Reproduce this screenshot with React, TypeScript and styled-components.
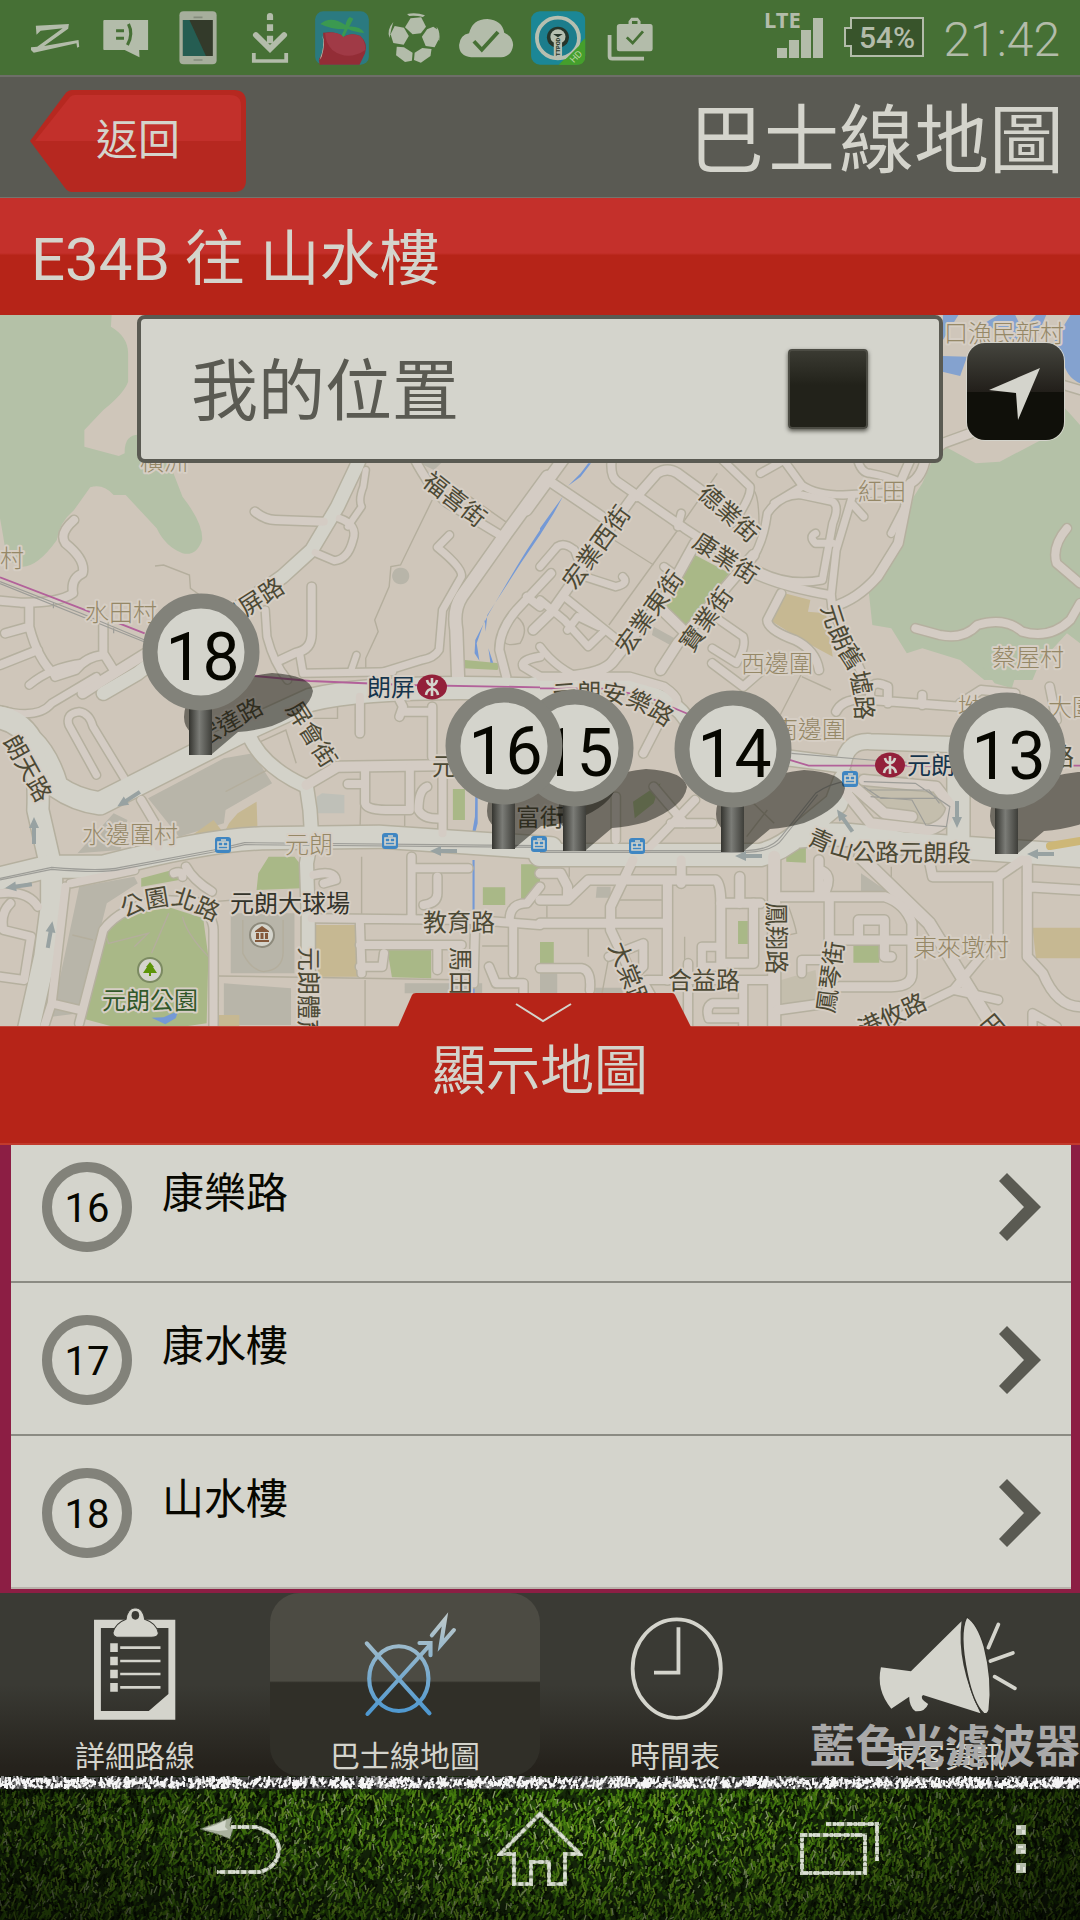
import React from "react";
import styled, { createGlobalStyle } from "styled-components";

const GlobalStyle = createGlobalStyle`
  * { box-sizing: border-box; }
  body {
    margin: 0;
    background: #22221b;
    font-family: Roboto, "Noto Sans CJK TC", sans-serif;
  }
  button { font: inherit; border: 0; padding: 0; margin: 0; background: none; cursor: pointer; }
  ul { list-style: none; margin: 0; padding: 0; }
  h1, h2 { margin: 0; font-weight: 400; }
  svg { display: block; }
`;

const paper = "#d4d4cc";
const ring = "#82827a";
const ink = "#070700";

const Screen = styled.div`
  min-height: 100vh;
  display: flex;
  flex-direction: column;
`;

/* ---------- status bar ---------- */

const StatusBar = styled.div`
  display: flex;
  align-items: center;
  height: 75px;
  padding: 0 20px 0 18px;
  background: #467035;
  color: #b3bcaa;
`;
const StatusIcon = styled.svg`
  width: 72px;
  height: 75px;
`;
const StatusRight = styled.div`
  display: flex;
  align-items: center;
  gap: 18px;
  margin-left: auto;
`;
const Clock = styled.time`
  font-size: 48px;
  font-weight: 300;
  line-height: 75px;
  padding-top: 4px;
`;

type Slot = { slot: number; children: React.ReactNode };
const Glyph = ({ slot, children }: Slot) => (
  <StatusIcon viewBox="0 0 72 75" aria-hidden="true">
    <g transform={`translate(${-18 - slot * 72} 0) scale(.3444 .3333)`}>{children}</g>
  </StatusIcon>
);

const tint = "#b3bcaa";

const StatusIcons = () => (
  <>
    <Glyph slot={0}>
      <path fill={tint} d="M104 77L200 72 198 86 128 138 228 120 230 140 224 143 222 130 98 158 90 150 90 142 108 140 182 85 118 92 106 104Z" />
    </Glyph>
    <Glyph slot={1}>
      <path fill={tint} d="M303 60H430V150H404L405 172 362 150H302Q300 150 300 147V63Q300 60 303 60Z" />
      <path stroke="#467035" strokeWidth="9" fill="none" d="M337 92H360M337 115H360M373 72Q388 102 370 135" />
    </Glyph>
    <Glyph slot={2}>
      <rect x="521" y="34" width="108" height="159" rx="12" fill="#a6ae9c" />
      <path fill="#333a2a" d="M531 60H618V168H531Z" />
      <path fill="#255d52" d="M531 60H550L598 168H531Z" />
      <path stroke="#848c7c" strokeWidth="5" d="M562 52H588M562 180H588" />
    </Glyph>
    <Glyph slot={3}>
      <path fill={tint} d="M775 60V48Q775 39 784 39T793 48V60ZM775 73H793V93H775ZM775 107H793V130H775Z" />
      <path stroke={tint} strokeWidth="17" fill="none" strokeLinecap="round" d="M743 105L784 147 825 105" />
      <path stroke={tint} strokeWidth="11" fill="none" d="M737 159V183H831V159" />
    </Glyph>
    <Glyph slot={4}>
      <rect x="915" y="34" width="156" height="160" rx="24" fill="#2b7a80" />
      <path fill="#932d36" d="M938 98Q975 92 998 110 1020 96 1046 108 1070 130 1060 160L1044 194H928L926 178Q945 150 938 98Z" />
      <path fill="#a03a46" d="M944 100Q975 92 998 110 1020 96 1046 108 1062 125 1061 150 1010 185 965 150 945 130 944 100Z" />
      <path fill={tint} d="M936 106Q946 130 934 170L928 180Q944 140 936 106Z" />
      <path fill="#3b9950" d="M930 72Q960 45 1003 75 1008 55 1016 51L1026 56 1014 80Q1045 78 1058 99 1030 96 1010 87L998 112 992 106 1000 88Q960 88 930 72Z" />
    </Glyph>
    <Glyph slot={5}>
      <g fill={tint}>
        <path d="M1182 42Q1208 36 1234 46L1228 51Q1208 46 1188 48Z" />
        <path d="M1192 55L1223 52 1237 80 1222 100 1198 103 1176 82Z" />
        <path d="M1146 78L1173 83 1187 108 1172 134 1142 129 1134 103Z" />
        <path d="M1258 80L1272 90 1274 118 1262 142 1236 138 1225 110 1240 88Z" />
        <path d="M1152 140L1173 142 1198 158 1196 182 1176 186 1150 166Z" />
        <path d="M1253 147L1250 168 1222 188 1202 180 1204 158 1226 144Z" />
        <path d="M1142 66Q1122 90 1131 114L1136 88ZM1268 80Q1280 98 1275 124L1270 104Z" />
      </g>
    </Glyph>
    <Glyph slot={6}>
      <path fill={tint} d="M1368 172Q1333 168 1333 135 1336 105 1362 100 1372 57 1415 57 1458 60 1464 98 1488 108 1490 135 1486 170 1455 172Z" />
      <path stroke="#467035" strokeWidth="11" fill="none" d="M1376 124L1399 149 1446 96" />
    </Glyph>
    <Glyph slot={7}>
      <g transform="translate(1568 0)">
        <rect x="-26" y="34" width="157" height="160" rx="26" fill="#1b8796" />
        <path fill="#459f2c" d="M54 194L131 115V168Q131 194 105 194Z" />
        <circle cx="52" cy="114" r="61" fill="#1c7d8c" stroke="#b6bfb0" strokeWidth="11" />
        <path fill="#459f2c" d="M58 194L131 119V168Q131 194 105 194Z" />
        <circle cx="52" cy="112" r="32" fill="#26352a" />
        <circle cx="52" cy="110" r="22" fill="#b6bfb0" />
        <path fill="#b6bfb0" d="M40 112H64V176H40Z" />
        <path fill="#26352a" d="M38 102H66L52 112Z" />
        <text transform="translate(58 168) rotate(-90)" fontSize="17" fontWeight="700" fill="#26352a">TTPOD</text>
        <text transform="translate(98 190) rotate(-45)" fontSize="28" fill="#b6d3a0">HD</text>
      </g>
    </Glyph>
    <Glyph slot={8}>
      <g transform="translate(1568 0)">
        <path fill={tint} fillRule="evenodd" d="M232 72H257V64L265 53H284L292 64V72H320Q327 72 327 80V147Q327 154 320 154H230Q223 154 223 147V80Q223 72 232 72ZM267 72H283V63H267Z" />
        <path stroke={tint} strokeWidth="11" fill="none" d="M202 105V169Q202 176 210 176H302" />
        <path stroke="#467035" strokeWidth="8" fill="none" d="M252 112L269 129 299 94" />
      </g>
    </Glyph>
  </>
);

/* ---------- headers ---------- */

const Header = styled.header`
  display: flex;
  align-items: center;
  justify-content: space-between;
  height: 123px;
  padding: 8px 16px 0 30px;
  background: #5a5a53;
  border-top: 2px solid #6e6e68;
  border-bottom: 1px solid #74746c;
  color: ${paper};
`;
const BackButton = styled.button`
  display: grid;
  width: 216px;
  height: 102px;
  color: ${paper};
  font-size: 42px;
  > * { grid-area: 1 / 1; }
  span { align-self: center; line-height: 60px; }
`;
const Title = styled.h1`
  font-size: 75px;
  line-height: 110px;
`;
const RouteBar = styled.h2`
  padding: 12px 31px 5px;
  font-size: 60px;
  line-height: 100px;
  color: ${paper};
  background: linear-gradient(#c4302b 0 47%, #b62418 49%);
`;

/* ---------- map ---------- */

const MapArea = styled.section`
  position: relative;
  flex: 1 0 600px;
  overflow: hidden;
  background: #cfc6ba;
`;
const MapDrawing = styled.svg`
  position: absolute;
  inset: 0;
  width: 100%;
  height: 100%;
`;
const LocationBox = styled.label`
  position: absolute;
  top: 0;
  left: 137px;
  right: 137px;
  display: flex;
  align-items: center;
  justify-content: space-between;
  height: 148px;
  padding: 0 71px 0 50px;
  border: 4px solid #5a5a52;
  border-radius: 8px;
  background: ${paper};
  color: #5a5a52;
  font-size: 67px;
  line-height: 100px;
`;
const LocationText = styled.span`
  padding-top: 6px;
`;
const LocationToggle = styled.input`
  appearance: none;
  width: 80px;
  height: 80px;
  margin: 0;
  border-radius: 4px;
  border: 2px solid #4c4c44;
  background: linear-gradient(#3a3a32, #22221a 45%);
  box-shadow: 0 2px 4px #55554d;
`;
const LocateButton = styled.button`
  position: absolute;
  top: 28px;
  right: 16px;
  width: 97px;
  height: 97px;
  border-radius: 18px;
  background: linear-gradient(#45453e, #221f1a 50%, #10100a 51%);
  box-shadow: 0 0 0 1px ${paper};
`;
const PinButton = styled.button<{ $x: number; $y: number }>`
  position: absolute;
  left: ${(p) => (p.$x / 1080) * 100}%;
  top: ${(p) => (p.$y / 711) * 100}%;
  margin-left: -59px;
  width: 119px;
  height: 162px;
  color: ${ink};
  svg { position: absolute; left: 0; top: 0; }
`;
const PinNumber = styled.span`
  position: relative;
  display: block;
  height: 162px;
  padding-left: 2px;
  line-height: 130px;
  font-size: 66px;
`;
const PinShade = styled.svg<{ $x: number; $y: number }>`
  position: absolute;
  left: ${(p) => (p.$x / 1080) * 100}%;
  top: ${(p) => (p.$y / 711) * 100}%;
  margin-left: -59px;
`;

const Pin = ({ n, x, y }: { n: number; x: number; y: number }) => (
  <PinButton $x={x} $y={y} aria-label={`${n}`}>
    <svg width="118" height="162">
      <defs>
        <linearGradient id={`post${n}`}>
          <stop offset="0" stopColor="#34342f" />
          <stop offset=".45" stopColor="#7b7c77" />
          <stop offset="1" stopColor="#3e3e39" />
        </linearGradient>
      </defs>
      <rect x="47" y="112" width="23" height="50" fill={`url(#post${n})`} />
      <circle cx="59" cy="59" r="51" fill={paper} stroke={ring} strokeWidth="15" />
    </svg>
    <PinNumber>{n}</PinNumber>
  </PinButton>
);

const pins = [
  { n: 18, x: 201, y: 278 },
  { n: 15, x: 575, y: 374 },
  { n: 16, x: 504, y: 372 },
  { n: 14, x: 733, y: 375 },
  { n: 13, x: 1007, y: 377 },
];

type TileKey = "nw" | "ne" | "sw" | "se";
const origin: Record<TileKey, [number, number]> = { nw: [0, -5], ne: [540, -5], sw: [0, 355], se: [540, 355] };
const tileKeys: TileKey[] = ["nw", "ne", "sw", "se"];

/* each entry: [road width in pixels, path] */
const roads: Record<TileKey, [number, string][]> = {
  nw: [
    [13, "M1070 380L1035 470 980 590 905 720 820 800 640 930 500 1010 400 1090 300 1150"],
    [8, "M215 630Q170 670 190 700 250 750 240 790 205 805 212 850 170 880 60 878L0 872"],
    [8, "M740 605Q770 630 800 630L940 635"],
    [7, "M985 625Q1040 645 1025 690 1010 750 970 752L915 728"],
    [6, "M1062 480L1055 530Q1040 570 1050 590L1010 650"],
    [7, "M1305 675L1270 712Q1345 775 1340 800L1285 900 1275 1020Q1260 1045 1225 1050L1100 1090"],
    [8, "M1200 440Q1250 540 1300 580L1460 680"],
    [12, "M1590 500L1470 670 1340 860Q1315 900 1325 960L1330 1100"],
    [8, "M905 830V970Q905 1020 860 1028L815 1050"],
    [7, "M770 900L775 980Q795 1060 835 1110M870 1030L880 1090 1140 1085"],
    [8, "M85 890V950L15 970M85 950Q110 1050 160 1095M0 1065L110 1020M300 930V1030L330 1080M300 1035Q250 1040 220 1080L160 1100"],
    [10, "M440 1020L300 1110 240 1150"],
    [6, "M1035 1035L1020 1080"],
    [8, "M1600 790L1500 900Q1450 960 1450 1020L1470 1100M1530 860L1568 890M1568 1040Q1510 1050 1520 1070L1568 1100"],
  ],
  ne: [
    [11, "M80 430L-40 600"],
    [9, "M36 520L180 620M280 560L340 490Q370 470 400 490L480 550M270 560L200 660 30 910-20 960"],
    [8, "M210 430Q200 500 225 515L420 655 620 790Q700 830 840 855"],
    [7, "M400 650L410 610M520 440Q580 500 610 530 615 560 560 640M640 490L710 450M700 440L760 525Q800 555 880 555L1050 545"],
    [7, "M680 580L760 530M620 740Q650 690 660 610 700 550 760 555L850 575Q870 590 850 640L820 810Q720 830 630 780"],
    [7, "M850 700L800 700Q780 680 800 670M905 580L940 620M905 565L860 720 845 860M920 440Q930 490 960 490 1060 510 1070 540L1060 590 1020 670"],
    [9, "M1250 370L1170 400 1120 440Q1110 500 1075 520L1040 700 980 800Q920 870 850 890"],
    [8, "M845 860L850 900 930 1080M700 850L660 930Q660 960 740 990 800 1020 810 1080"],
    [8, "M1075 450L1045 520M1530 655Q1485 710 1500 760L1568 820M1568 880L1540 930Q1480 990 1400 965 1350 920 1270 945 1230 990 1160 975L1090 955M1568 240L1520 225"],
    [10, "M620 735L400 1000 350 1080M450 700L370 850 215 1050Q190 1090 80 1100"],
    [7, "M360 770L400 800M520 930L590 980Q600 1010 570 1060L500 1015"],
    [7, "M0 770L50 710Q70 695 100 720M100 720L130 800 220 830Q260 820 240 800M0 870L70 930 140 1010 190 960M70 860L220 985M80 960L110 920 170 950M0 1010Q50 1080 130 1110"],
    [10, "M360 905L440 985"],
  ],
  sw: [
    [7, "M85 45Q150 -10 240 -20M280 315L200 165Q190 130 230 125 260 130 270 170L370 340M0 120Q110 150 150 100L280 20"],
    [22, "M-30 140Q50 140 90 210 140 260 165 350 220 390 290 400L730 170 900 90Q1100 40 1600 60"],
    [21, "M90 210Q115 300 110 420L150 600 150 700 130 860 80 1090"],
    [22, "M-20 630L140 590 300 590Q600 510 760 505L1100 500 1600 535"],
    [13, "M720 190Q760 290 890 350L900 420 905 500 890 580 895 740 895 1080"],
    [10, "M890 345L980 290 1330 285"],
    [8, "M1060 290V400Q1065 420 1120 420H1190V290M1010 342H1060M1285 285V490M1240 350Q1215 360 1215 420 1230 450 1285 445"],
    [8, "M1045 80V190M1160 90L1170 110 1160 140M1170 125H1255V240M1255 110V260M410 390L450 460 460 530"],
    [8, "M540 590Q560 630 615 665M205 640L300 620 390 600M505 610Q530 600 530 620"],
    [8, "M230 1060L300 780Q350 710 470 690L570 695Q620 740 620 780V1080M150 1000L230 1020M125 1080L150 1000 190 650"],
    [8, "M910 615Q970 600 975 630L940 640M905 745L1380 750 1568 765M1195 560V740M1195 595H1360M1270 620V670Q1270 700 1230 705M1045 760L1050 910M1045 825H1340M1045 890H1110L1115 850M1270 830V900"],
    [8, "M30 700Q0 730 10 780L90 800 70 930 0 920M0 670Q80 660 110 710M1490 760V910M1420 890L1440 940H1520V1080M1380 750L1375 940M1480 750Q1480 700 1530 700L1568 650"],
  ],
  se: [
    [15, "M-20 45H240Q380 80 420 140L500 250 690 260 880 285Q890 210 960 215L1240 225"],
    [8, "M0 20L260 20 360 50Q430 100 370 110L300 250M500 -20L590 50 640 5M860 125Q880 80 960 90L1220 110M960 90Q950 20 1010 50L1010 100M1110 75V105M1220 100L1280 60 1380 70M1480 50L1500 150"],
    [22, "M0 555H640Q700 540 760 485L860 400 885 330M750 500Q900 480 1050 520L1600 560M1215 225V500"],
    [10, "M890 370L960 460 1130 480Q1190 460 1195 410L1150 350 940 330M900 340L1000 430 1080 440"],
    [9, "M1130 570L1140 620H1330L1400 570M1330 620V810M1415 570L1415 860 1460 910Q1500 1010 1568 1010M1415 650L1568 660"],
    [12, "M930 560L1130 760 1320 1080M680 560V1080"],
    [9, "M270 570L205 710 205 780 260 900M0 610H60L80 650V690H0M80 690L140 630H510Q525 640 525 700H640M0 760H365M370 640V930M410 570V640"],
    [9, "M525 700V880H620V700M580 620V700M700 680H1000Q1060 700 1080 760V910Q1080 950 1020 950H870M840 680V850L830 1000 690 1020M810 570V680M810 600Q850 610 830 660M840 810H1080M925 800V750H1000V860H1020"],
    [8, "M200 860L300 820V890L270 920M310 930H670M300 935L380 1080M470 890L470 830H525M470 890H530M430 880V930M590 930V1080M430 950V1080M590 1000H500Q480 1010 490 1045H590M760 910V870H830M0 895H120Q150 900 145 960M1330 990L1200 960 1100 1010 980 1080M1200 960L1320 810M1430 1080V1030L1500 1070"],
    [8, "M0 200L120 300M310 540L450 390M220 380V510M330 350L420 460M380 460H500"],
  ],
};

/* each entry: [fill, path] */
const areas: Record<TileKey, [string, string][]> = {
  nw: [
    ["#b4c1a7", "M0 0H325L322 50Q372 80 372 130V215Q360 250 300 300L245 360V410L345 438 362 430Q360 370 410 375L500 480 530 560Q590 640 587 690 570 740 530 730 480 710 455 655L365 555 330 555Q300 520 262 532L215 600Q170 640 165 690 110 770 65 770L20 750Q10 680 0 625Z"],
    ["#b8b5a9", "M1210 455H1285L1260 480ZM1163 773A25 25 0 1 0 1164 773Z"],
    ["#a9b887", "M1350 1050L1450 1060 1445 1080 1345 1075Z"],
    ["#7499d6", "M1568 660L1530 720 1500 770 1420 910 1380 990 1378 1030 1392 1052 1384 1000 1408 930 1410 965 1415 915 1512 760 1568 675ZM1418 1015L1432 1058H1424Z"],
  ],
  ne: [
    ["#84a2cf", "M1170 15H1568V220Q1525 200 1520 150L1240 140 1220 198 1168 185ZM280 15H360V22H300Z"],
    ["#cfc6ba", "M1215 15H1330L1290 40 1370 90 1240 140 1170 138V90ZM1380 15H1440L1400 60ZM1470 15H1540L1490 100 1430 110Z"],
    ["#b4c1a7", "M1568 345Q1530 300 1520 290L1510 360 1335 455 1265 460 1180 412 1140 450 1110 520 1085 560 1050 700 955 850 965 945 1020 955 1065 1030 1110 1015 1220 1050 1290 1110H1430L1450 1060 1530 970 1568 1000Z"],
    ["#a9b887", "M450 735L550 790 420 960 355 910Z"],
    ["#c6b892", "M710 850L785 870 778 905 830 910 850 1040 760 990 675 935Z"],
    ["#b8b5a9", "M330 950L400 990 395 1015 325 975Z"],
    ["#7499d6", "M148 460L118 500 82 527 118 490 140 460ZM66 560L40 610 0 675V655L38 600Z"],
  ],
  sw: [
    ["#b8b5a9", "M430 385L650 265 735 250 790 340 655 420 650 460 520 500ZM225 550L330 430 370 450 350 540ZM230 650L390 620 400 640 310 700 230 1030 150 1040ZM670 730H855V910H670ZM650 940L845 955V1065H650ZM1175 940H1400V970H1175Z"],
    ["#bfc0b8", "M920 380L935 370 1000 375V430H918Z"],
    ["#c6b892", "M665 460L690 430 745 395 748 485 640 510ZM525 520L620 450 650 490ZM910 765H1040V920H925ZM635 1035H695V1068H635Z"],
    ["#a9b887", "M410 625L500 600 520 630 410 650ZM340 720L470 705 590 745 605 860 600 1060 400 1090 248 1048 295 830ZM780 560H855L885 600 875 655 745 660 750 610ZM1315 357H1350V450H1315ZM1125 840H1252V925L1138 922ZM1402 652H1467V705H1402ZM1513 583H1568V685H1513Z"],
    ["#7499d6", "M440 1043L475 1042 518 1022 510 1045 480 1063ZM1380 370H1387V460L1378 495H1370L1379 440ZM1372 570H1378V970H1372V700Z"],
  ],
  se: [
    ["#b4c1a7", "M1285 -10H1430L1380 20 1370 55 1320 40Z"],
    ["#a9b887", "M715 575V545L755 510 772 518V578ZM575 753H615V822H575ZM910 826H985V878H910ZM0 816H40V883H0ZM270 395L350 340 330 400 275 445Z"],
    ["#c6b892", "M1430 773H1568V865H1440Z"],
    ["#b8b5a9", "M0 910H50V970H0ZM160 953H240V970H160ZM165 650H205V683H162ZM932 610L1010 665H932Z"],
    ["#c4bead", "M920 310L1080 320 1190 410 1160 475 1090 470 930 370ZM700 930L800 900 810 1000H700Z"],
  ],
};

/* footprints, alleys and railway sidings */
const lines: Record<TileKey, string> = {
  nw: "M450 768L475 765 550 795 553 835 580 855M1255 570L1163 765 1135 770 1130 830 1088 930 1098 965 1062 1045V1080M1365 560L1475 640M1500 920Q1540 950 1510 1000 1470 1010 1465 995",
  ne: "M515 490L400 660 200 945M215 690L330 765M30 530L200 650M620 540Q640 560 635 700",
  sw: "M745 220L830 180 860 280M905 145L980 145V80M655 365L785 295M1050 560V740M1210 600H1350M1048 380L1045 490M1175 430V490M210 795L270 810M620 695L680 690M635 918L1370 930M1060 930V1068M705 750V850Q730 900 765 905 820 900 822 850V750M305 790L315 820 430 790 390 830M440 850L490 730M530 740Q540 790 605 860M1400 828H1500",
  se: "M85 580V620M0 775H140V860M20 690V750M220 690H360M230 640V690M420 800V940M765 0L690 150M760 20L845 60M720 705Q740 760 745 790L700 800M610 390L680 460M660 420L600 500M1020 590V660M200 860L180 970",
};
const rails: Record<TileKey, string> = {
  nw: "M0 815L235 910 420 990M0 821L420 996M155 880V895M330 955V970",
  ne: "",
  sw: "M0 625L150 592Q300 605 350 592L620 540 710 518 1568 527M0 630L150 598Q300 610 350 598L620 546 710 524 1568 532",
  se: "M0 542H600Q670 540 700 500L800 370Q840 340 900 332M0 547H600Q680 545 706 504L806 374M730 250L960 270 1190 285M940 335L1090 340 1190 410 1180 470 1120 465 1080 390 960 380M950 360H1130L1160 400M940 350L990 385H1150",
};
const metro: Record<TileKey, string> = {
  nw: "M0 802L235 895 420 970",
  ne: "",
  sw: "M740 18L900 33 1180 45 1568 52",
  se: "M0 55L190 56 310 80 430 132M720 268L780 287 1568 287",
};

type LabelKind = "street" | "village" | "station" | "park" | "place";
const labelColor: Record<LabelKind, string> = {
  street: "#4c4934",
  village: "#958867",
  station: "#15344c",
  park: "#31582a",
  place: "#33332a",
};
const labels: [TileKey, number, number, number, LabelKind, string][] = [
  ["nw", 475, 452, 0, "village", "橫洲"],
  ["nw", 1322, 568, 38, "street", "福喜街"],
  ["nw", 730, 878, -33, "street", "朗屏路"],
  ["nw", 36, 745, 0, "village", "村"],
  ["nw", 350, 905, 0, "village", "水田村"],
  ["ne", 1347, 68, 0, "village", "口漁民新村"],
  ["ne", 550, 610, 42, "street", "德業街"],
  ["ne", 540, 744, 33, "street", "康業街"],
  ["ne", 164, 712, -54, "street", "宏業西街"],
  ["ne", 316, 906, -54, "street", "宏業東街"],
  ["ne", 482, 928, -54, "street", "寶業街"],
  ["ne", 992, 542, 0, "village", "紅田"],
  ["ne", 688, 1058, 0, "village", "西邊圍"],
  ["ne", 1418, 1040, 0, "village", "蔡屋村"],
  ["sw", 665, 157, -30, "street", "宏達路"],
  ["sw", 1135, 50, 0, "station", "朗屏"],
  ["sw", 907, 193, 58, "street", "屏會街"],
  ["sw", 82, 294, 61, "street", "朗天路"],
  ["sw", 1325, 289, 0, "street", "元朗"],
  ["sw", 1568, 440, 0, "street", "富街"],
  ["sw", 377, 491, 0, "village", "水邊圍村"],
  ["sw", 897, 521, 0, "village", "元朗"],
  ["sw", 842, 699, 0, "place", "元朗大球場"],
  ["sw", 1333, 756, 0, "street", "教育路"],
  ["sw", 1340, 940, 90, "street", "馬田路"],
  ["sw", 898, 1010, 90, "street", "元朗體育路"],
  ["sw", 435, 991, 0, "park", "元朗公園"],
  ["se", 785, 176, 0, "village", "南邊圍"],
  ["se", 1135, 284, 0, "station", "元朗"],
  ["se", 1250, 108, 0, "village", "坳"],
  ["se", 1545, 110, 0, "village", "大圍"],
  ["se", 1515, 259, 0, "street", "路"],
  ["se", 687, 805, 90, "street", "鳳翔路"],
  ["se", 841, 920, -82, "street", "鳳琴街"],
  ["se", 1222, 830, 0, "village", "東來墩村"],
  ["se", 260, 918, 68, "street", "大棠路"],
  ["se", 477, 929, 0, "street", "合益路"],
  ["se", 1022, 1034, -25, "street", "港攸路"],
  ["se", 1290, 1092, -40, "street", "攸田"],
];

const MapLabel = styled.text`
  font-family: "Noto Sans CJK TC", sans-serif;
  font-size: 24px;
  stroke: #d6cec4;
  stroke-width: 4px;
  stroke-linejoin: round;
  paint-order: stroke;
`;

const curved: [string, string, string][] = [
  ["oldmarket", "M821 292Q831 327 843 345 858 365 855 425", "元朗舊墟路"],
  ["onlok", "M553 388Q600 383 625 390 650 398 690 430", "元朗安樂路"],
  ["parknorth", "M124 603Q165 584 186 594L250 622", "公園北路"],
  ["castlepeak", "M806 528Q842 546 870 546L1000 547", "青山公路元朗段"],
];

const toMap = (t: TileKey, x: number, y: number) => [origin[t][0] + x / 2.904, origin[t][1] + y / 3];

const TileLayer = ({ draw }: { draw: (t: TileKey) => React.ReactNode }) => (
  <>
    {tileKeys.map((t) => (
      <g key={t} transform={`translate(${origin[t][0]} ${origin[t][1]}) scale(.3444 .3333)`}>
        {draw(t)}
      </g>
    ))}
  </>
);

const stroke = { fill: "none", vectorEffect: "non-scaling-stroke" as const };

const Mtr = ({ x, y }: { x: number; y: number }) => (
  <g transform={`translate(${x} ${y})`}>
    <ellipse rx="15" ry="12.5" fill="#93203a" />
    <path d="M-5 -7Q-4 -2 0 -2 4 -2 5 -7M-6 8Q-5 2 0 2 5 2 6 8M0 -9V9" fill="none" stroke={paper} strokeWidth="2.6" />
  </g>
);
const Tram = ({ x, y }: { x: number; y: number }) => (
  <g transform={`translate(${x} ${y})`}>
    <rect x="-8" y="-8" width="16" height="16" rx="3" fill="#3f86c2" />
    <path d="M-5 4V-3H5V4ZM-5 1H5M0 -3V1M-2 -5H3" fill="none" stroke={paper} strokeWidth="1.6" />
  </g>
);
const OneWay = ({ x, y, r }: { x: number; y: number; r: number }) => (
  <path transform={`translate(${x} ${y}) rotate(${r})`} fill="#98a2a2" d="M-14 0L-3 -5V-2H13V2H-3V5Z" />
);

const CityMap = () => (
  <MapDrawing viewBox="0 0 1080 711" preserveAspectRatio="xMidYMid slice" role="img" aria-label="元朗">
    <rect width="1080" height="711" fill="#cfc6ba" />
    <TileLayer draw={(t) => areas[t].map(([c, d], i) => <path key={i} fill={c} d={d} />)} />
    <TileLayer draw={(t) => <path {...stroke} stroke="#b4ae9d" strokeWidth="1.4" d={lines[t]} />} />
    <TileLayer
      draw={(t) => roads[t].map(([w, d], i) => (
        <path key={i} {...stroke} stroke="#b5b09f" strokeWidth={w + 3} strokeLinecap="round" strokeLinejoin="round" d={d} />
      ))}
    />
    <TileLayer
      draw={(t) => roads[t].map(([w, d], i) => (
        <path key={i} {...stroke} stroke={w > 12 ? "#d3d2c9" : "#d4ccc4"} strokeWidth={w} strokeLinecap="round" strokeLinejoin="round" d={d} />
      ))}
    />
    <path d="M1050 531L1080 526" stroke="#cdb777" strokeWidth="8" strokeLinecap="round" />
    <TileLayer draw={(t) => <path {...stroke} stroke="#9d9d98" strokeWidth="1.2" d={rails[t]} />} />
    <TileLayer draw={(t) => <path {...stroke} stroke="#b2619a" strokeWidth="1.8" d={metro[t]} />} />
    <OneWay x={129} y={484} r={-33} />
    <OneWay x={34} y={516} r={90} />
    <OneWay x={19} y={571} r={-8} />
    <OneWay x={50} y={620} r={100} />
    <OneWay x={444} y={536} r={0} />
    <OneWay x={749} y={541} r={0} />
    <OneWay x={957} y={499} r={-90} />
    <OneWay x={1041} y={539} r={0} />
    <OneWay x={845} y={506} r={55} />
    {labels.map(([t, lx, ly, r, kind, text]) => {
      const [x, y] = toMap(t, lx, ly);
      return (
        <MapLabel
          key={`${text}${lx}`}
          transform={`translate(${x.toFixed(0)} ${y.toFixed(0)}) rotate(${r})`}
          y="9"
          textAnchor="middle"
          fontWeight={kind === "village" ? 300 : 400}
          fill={labelColor[kind]}
        >
          {text}
        </MapLabel>
      );
    })}
    {curved.map(([id, d, text]) => (
      <g key={id}>
        <path id={id} d={d} fill="none" />
        <MapLabel fill={labelColor.street}>
          <textPath href={`#${id}`}>{text}</textPath>
        </MapLabel>
      </g>
    ))}
    <Mtr x={432} y={372} />
    <Mtr x={890} y={450} />
    <Tram x={223} y={530} />
    <Tram x={390} y={526} />
    <Tram x={539} y={529} />
    <Tram x={637} y={531} />
    <Tram x={850} y={464} />
    <g transform="translate(262 620)">
      <circle r="12" fill={paper} stroke="#8d8a7c" strokeWidth="2" />
      <path fill="#84583a" d="M-7 -4L0 -9 7 -4V-3H-7ZM-6 -2H-3V4H-6ZM-1.500 -2H1.500V4H-1.500ZM3 -2H6V4H3ZM-7 5H7V7H-7Z" />
    </g>
    <g transform="translate(150 655)">
      <circle r="12" fill={paper} stroke="#7c8a62" strokeWidth="2" />
      <path fill="#5c9408" d="M0 -8L4 -3H3L7 3H1V6H-1V3H-7L-3 -3H-4Z" />
    </g>
  </MapDrawing>
);

/* ---------- drawer and station list ---------- */

const Drawer = styled.button`
  position: relative;
  height: 119px;
  padding-bottom: 26px;
  border-top: 1px solid #c2483c;
  border-bottom: 2px solid #c23a2c;
  background: #b62418;
  color: ${paper};
  font-size: 54px;
  line-height: 80px;
`;
const DrawerHandle = styled.svg`
  position: absolute;
  left: 50%;
  bottom: 100%;
  margin-left: -142px;
`;
const Stations = styled.div`
  overflow: hidden;
  padding: 0 9px 4px 11px;
  background: #8c1e44;
`;
const StationList = styled.ul`
  margin-top: -15px;
  background: ${paper};
`;
const StationRow = styled.button`
  display: flex;
  align-items: center;
  gap: 30px;
  width: 100%;
  height: 153px;
  padding: 2px 30px 0 31px;
  border-bottom: 2px solid #8b8b83;
  color: ${ink};
  li:last-child > & { border-bottom-color: #b9b3ab; }
`;
const StationNumber = styled.span`
  display: flex;
  align-items: center;
  justify-content: center;
  width: 90px;
  height: 90px;
  border: 10px solid ${ring};
  border-radius: 50%;
  font-size: 40px;
  line-height: 40px;
  padding-top: 4px;
`;
const StationName = styled.span`
  flex: 1;
  align-self: flex-start;
  padding-top: 32px;
  text-align: left;
  font-size: 42px;
  line-height: 60px;
`;

const stations: [number, string][] = [[16, "康樂路"], [17, "康水樓"], [18, "山水樓"]];

/* ---------- tabs ---------- */

const TabBar = styled.nav`
  position: relative;
  display: grid;
  grid-template-columns: repeat(4, 1fr);
  background: linear-gradient(#3a3a34 50%, #25221c 95%);
`;
const Tab = styled.button<{ $active?: boolean }>`
  display: flex;
  flex-direction: column;
  align-items: center;
  gap: 12px;
  padding-top: 12px;
  color: ${paper};
  font-size: 30px;
  line-height: 39px;
  border-radius: ${(p) => (p.$active ? "30px" : "0")};
  background: ${(p) => (p.$active ? "linear-gradient(#4c4b43 0 48%, #302f28 49%)" : "none")};
`;
const FilterNotice = styled.div`
  position: absolute;
  right: 0;
  bottom: 0;
  color: #a9a9a9;
  font-size: 45px;
  font-weight: 700;
  line-height: 56px;
  pointer-events: none;
`;
const TabIcon = ({ dx, children }: { dx: number; children: React.ReactNode }) => (
  <svg width="140" height="120" viewBox="0 0 140 120" overflow="visible" aria-hidden="true">
    <g transform={`translate(${dx} -25) scale(.3444 .3333)`}>{children}</g>
  </svg>
);

/* ---------- system navigation ---------- */

const SystemNav = styled.nav`
  position: relative;
  display: grid;
  grid-template-columns: repeat(3, 1fr) 62px;
  align-items: center;
  height: 144px;
  padding: 5px 28px 4px 90px;
  background: #16290a;
  overflow: hidden;
`;
const Turf = styled.svg`
  position: absolute;
  inset: 0;
  width: 100%;
  height: 100%;
`;
const NavButton = styled.button`
  position: relative;
  display: flex;
  justify-content: center;
`;

const makeRandom = (seed: number) => () => {
  seed = (seed * 16807) % 2147483647;
  return seed / 2147483647;
};
const blades = (seed: number, count: number, top: number, bottom: number, reach: number) => {
  const rnd = makeRandom(seed);
  let d = "";
  for (let i = 0; i < count; i++) {
    const x = Math.round(rnd() * 1080);
    const y = Math.round(top + rnd() * (bottom - top));
    const dx = Math.round((rnd() - 0.4) * reach);
    const dy = Math.round((rnd() * 0.8 + 0.2) * reach);
    d += `M${x} ${y}l${dx} ${-dy}`;
  }
  return d;
};
const turf: [string, number, string][] = [
  ["#234808", 2.5, blades(11, 3000, 14, 150, 9)],
  ["#081002", 2, blades(37, 2600, 16, 150, 9)],
  ["#38690c", 2, blades(23, 3000, 16, 150, 9)],
  ["#0d1a04", 1.6, blades(61, 1800, 16, 150, 8)],
  ["#4a8410", 1.8, blades(41, 2200, 18, 150, 9)],
  ["#6a9422", 1.5, blades(59, 1900, 20, 150, 8)],
  ["#8ea36c", 1.3, blades(73, 700, 22, 150, 7)],
];
const chalk: [string, string][] = [
  ["#8c8c8c", blades(83, 1200, 4, 13, 6)],
  ["#222222", blades(89, 900, 4, 13, 6)],
  ["#f4f4f4", blades(97, 1300, 5, 13, 6)],
];

const Chalk = ({ d }: { d: string }) => (
  <>
    <path d={d} fill="none" stroke="#6f7d60" strokeWidth="4" />
    <path d={d} fill="none" stroke="#c9cfc0" strokeWidth="4" strokeDasharray="5 2 3 1 7 3" />
    <path d={d} fill="none" stroke="#e4e7de" strokeWidth="1.6" strokeDasharray="3 4 6 2" />
  </>
);

export default function App() {
  return (
    <Screen>
      <GlobalStyle />
      <StatusBar>
        <StatusIcons />
        <StatusRight>
          <svg width="60" height="75" viewBox="0 0 60 75">
            <text x="-1" y="28" fontFamily="Noto Sans, sans-serif" fontWeight="700" fontSize="22" fill={tint}>LTE</text>
            <path fill={tint} d="M12 48H22V58H12ZM24 40H34V58H24ZM36 30H46V58H36ZM48 18H58V58H48Z" />
          </svg>
          <svg width="82" height="75" viewBox="0 0 82 75">
            <path fill="#38542b" stroke={tint} strokeWidth="2" d="M8 18H80V56H8V46H2V28H8Z" />
            <text x="44" y="48" textAnchor="middle" fontSize="30" fontWeight="500" fill={tint}>54%</text>
          </svg>
          <Clock>21:42</Clock>
        </StatusRight>
      </StatusBar>

      <Header>
        <BackButton>
          <svg width="216" height="102" viewBox="0 0 216 102" aria-hidden="true">
            <path fill="#b62820" d="M0 51L35 4Q38 0 42 0H204Q216 0 216 12V90Q216 102 204 102H42Q38 102 35 98Z" />
            <path fill="#c2302b" d="M5 51L40 7Q42 5 45 5H200Q211 5 211 16V51Z" />
          </svg>
          <span>返回</span>
        </BackButton>
        <Title>巴士線地圖</Title>
      </Header>
      <RouteBar>E34B 往 山水樓</RouteBar>

      <MapArea>
        <CityMap />
        {pins.map((p) => (
          <PinShade key={p.n} $x={p.x} $y={p.y} width="172" height="162" aria-hidden="true">
            <path fill="#12120c" fillOpacity=".5" d="M58 104Q90 84 130 80 168 82 171 98 168 118 130 133 112 138 96 139L70 161H52L50 140Q38 132 44 112Z" />
          </PinShade>
        ))}
        {pins.map((p) => <Pin key={p.n} {...p} />)}
        <LocationBox>
          <LocationText>我的位置</LocationText>
          <LocationToggle type="checkbox" />
        </LocationBox>
        <LocateButton aria-label="定位">
          <svg width="97" height="97" viewBox="0 0 97 97">
            <path fill={paper} d="M73 25L51 77 49 50 22 47Z" />
          </svg>
        </LocateButton>
      </MapArea>

      <Drawer>
        <DrawerHandle width="293" height="34" viewBox="0 0 293 34" aria-hidden="true">
          <path fill="#b62418" d="M0 34L14 2Q15 0 18 0H274Q276 0 277 2L293 34Z" />
          <path d="M118 11L145 28 173 11" fill="none" stroke={paper} strokeWidth="2" />
        </DrawerHandle>
        顯示地圖
      </Drawer>

      <Stations>
        <StationList>
          {stations.map(([n, name]) => (
            <li key={n}>
              <StationRow>
                <StationNumber>{n}</StationNumber>
                <StationName>{name}</StationName>
                <svg width="42" height="68" viewBox="0 0 42 68" aria-hidden="true">
                  <path fill="#5a5a52" d="M8 0L42 34 8 68 0 60 25 34 0 8Z" />
                </svg>
              </StationRow>
            </li>
          ))}
        </StationList>
      </Stations>

      <TabBar>
        <Tab>
          <TabIcon dx={-65}>
            <path fill={paper} fillRule="evenodd" d="M273 119H509V419H273ZM293 144V393H432L489 342V144Z" />
            <path fill={paper} stroke="#3a3a34" strokeWidth="3" d="M366 118Q370 84 393 83 416 84 420 118 455 130 460 160 458 172 440 172H346Q328 172 328 158 335 130 366 118Z" />
            <ellipse cx="393" cy="106" rx="11" ry="13" fill="#3a3a34" />
            <path fill={paper} d="M320 190H342V216H320ZM320 230H342V256H320ZM320 269H342V295H320ZM320 309H342V335H320Z" />
            <path stroke={paper} strokeWidth="8" d="M349 203H466M349 243H466M349 282H466M349 322H466" />
          </TabIcon>
          詳細路線
        </Tab>
        <Tab $active>
          <TabIcon dx={-335}>
            <defs>
              <linearGradient id="compass" gradientUnits="userSpaceOnUse" x1="0" x2="0" y1="120" y2="410">
                <stop offset="0" stopColor="#b9c7ca" />
                <stop offset="1" stopColor="#4a96d0" />
              </linearGradient>
            </defs>
            <g fill="none" stroke="url(#compass)" strokeWidth="12" strokeLinecap="round">
              <ellipse cx="1158" cy="296" rx="86" ry="97" />
              <path d="M1065 190L1247 400M1067 402L1248 195M1218 189H1250V226M1254 166L1292 118 1280 195 1318 150" />
            </g>
          </TabIcon>
          巴士線地圖
        </Tab>
        <Tab>
          <TabIcon dx={-65}>
            <ellipse cx="397" cy="266" rx="128" ry="148" fill="none" stroke={paper} strokeWidth="11" />
            <path d="M402 142V278H331" fill="none" stroke={paper} strokeWidth="11" />
          </TabIcon>
          時間表
        </Tab>
        <Tab>
          <TabIcon dx={-335}>
            <g fill={paper}>
              <path d="M990 262L1077 274 1224 124Q1208 250 1279 400L1112 345Q1100 355 1127 372 1118 396 1090 394 1072 380 1072 350L1020 386Q975 330 990 262Z" />
              <path stroke="#35342e" strokeWidth="4" d="M1239 111Q1270 130 1290 200 1315 300 1304 390 1300 405 1288 400 1258 370 1240 280 1216 160 1239 111Z" />
            </g>
            <path d="M1302 203L1331 133M1308 243L1373 219M1320 290L1379 325" stroke={paper} strokeWidth="11" strokeLinecap="round" />
          </TabIcon>
          乘客資訊
        </Tab>
        <FilterNotice>藍色光濾波器</FilterNotice>
      </TabBar>

      <SystemNav>
        <Turf viewBox="0 0 1080 144" preserveAspectRatio="none" aria-hidden="true">
          <defs>
            <linearGradient id="shade">
              <stop offset="0" stopColor="#000" stopOpacity=".5" />
              <stop offset=".3" stopColor="#000" stopOpacity=".12" />
              <stop offset=".55" stopColor="#000" stopOpacity="0" />
              <stop offset=".75" stopColor="#000" stopOpacity=".12" />
              <stop offset="1" stopColor="#000" stopOpacity=".6" />
            </linearGradient>
            <linearGradient id="dusk" x2="0" y2="1">
              <stop offset=".4" stopColor="#000" stopOpacity="0" />
              <stop offset="1" stopColor="#000" stopOpacity=".4" />
            </linearGradient>
          </defs>
          {turf.map(([c, w, d]) => <path key={d.slice(0, 20)} d={d} stroke={c} strokeWidth={w} />)}
          <rect width="1080" height="144" fill="url(#shade)" />
          <rect width="1080" height="144" fill="url(#dusk)" />
          <rect y="1" width="1080" height="12" fill="#444" />
          {chalk.map(([c, d]) => <path key={c} d={d} stroke={c} strokeWidth="2" />)}
        </Turf>
        <NavButton aria-label="Back">
          <svg width="84" height="64" viewBox="0 0 84 64">
            <path fill="#a9b19e" stroke="#59664c" strokeWidth="1" strokeDasharray="3 2" d="M2 12L24 4 34 0 32 9 35 12 32 22 22 18Z" />
            <path fill="#d3d8cc" d="M6 12L18 8 28 3 27 10 30 13 20 14Z" />
            <Chalk d="M33 10H58Q80 16 81 32 80 50 62 55H19" />
          </svg>
        </NavButton>
        <NavButton aria-label="Home">
          <svg width="86" height="78" viewBox="0 0 86 78">
            <Chalk d="M43 4L3 44H17V74H34V52H52V74H68V44H83Z" />
          </svg>
        </NavButton>
        <NavButton aria-label="Recent apps">
          <svg width="82" height="56" viewBox="0 0 82 56">
            <Chalk d="M3 14H66V52H3ZM27 3H78V40" />
          </svg>
        </NavButton>
        <NavButton aria-label="Menu">
          <svg width="12" height="50" viewBox="0 0 12 50">
            <path fill="#b4bcab" d="M1 1H11V11H1ZM1 20H11V30H1ZM1 39H11V49H1Z" />
            <path fill="#dfe2d8" d="M2 2H6V5H2ZM7 6H10V10H7ZM3 22H8V24H3ZM6 26H10V29H6ZM2 41H5V46H2ZM8 43H10V48H8Z" />
          </svg>
        </NavButton>
      </SystemNav>
    </Screen>
  );
}
